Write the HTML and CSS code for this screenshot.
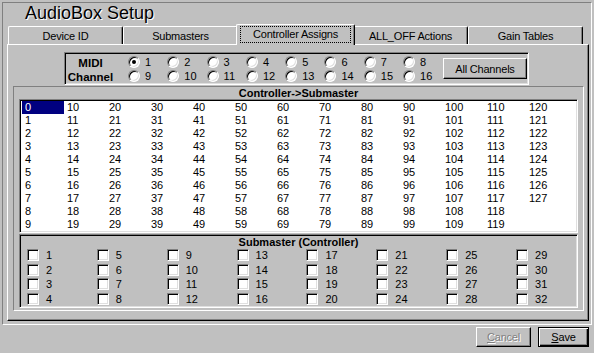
FILE: index.html
```html
<!DOCTYPE html>
<html>
<head>
<meta charset="utf-8">
<link rel="stylesheet" href="styles.css">
</head>
<body>
<div class="window">
  <div class="title">AudioBox Setup</div>
  <div class="tabs">
    <div class="tab">Device ID</div>
    <div class="tab">Submasters</div>
    <div class="tab sel"><div class="focus">Controller Assigns</div></div>
    <div class="tab">ALL_OFF Actions</div>
    <div class="tab">Gain Tables</div>
  </div>
  <div class="panel">
    <div class="midi">
      <div class="midilbl">MIDI<br>Channel</div>
      <div class="radios">
        <div class="r"><i class="radio on"></i><span>1</span></div>
        <div class="r"><i class="radio"></i><span>2</span></div>
        <div class="r"><i class="radio"></i><span>3</span></div>
        <div class="r"><i class="radio"></i><span>4</span></div>
        <div class="r"><i class="radio"></i><span>5</span></div>
        <div class="r"><i class="radio"></i><span>6</span></div>
        <div class="r"><i class="radio"></i><span>7</span></div>
        <div class="r"><i class="radio"></i><span>8</span></div>
        <div class="r"><i class="radio"></i><span>9</span></div>
        <div class="r"><i class="radio"></i><span>10</span></div>
        <div class="r"><i class="radio"></i><span>11</span></div>
        <div class="r"><i class="radio"></i><span>12</span></div>
        <div class="r"><i class="radio"></i><span>13</span></div>
        <div class="r"><i class="radio"></i><span>14</span></div>
        <div class="r"><i class="radio"></i><span>15</span></div>
        <div class="r"><i class="radio"></i><span>16</span></div>
      </div>
      <div class="btn allbtn">All Channels</div>
    </div>
    <div class="group">
      <div class="hdr hdr-top">Controller-&gt;Submaster</div>
      <div class="list">
        <div class="li selitem">0</div><div class="li">1</div><div class="li">2</div><div class="li">3</div><div class="li">4</div><div class="li">5</div><div class="li">6</div><div class="li">7</div><div class="li">8</div><div class="li">9</div>
        <div class="li">10</div><div class="li">11</div><div class="li">12</div><div class="li">13</div><div class="li">14</div><div class="li">15</div><div class="li">16</div><div class="li">17</div><div class="li">18</div><div class="li">19</div>
        <div class="li">20</div><div class="li">21</div><div class="li">22</div><div class="li">23</div><div class="li">24</div><div class="li">25</div><div class="li">26</div><div class="li">27</div><div class="li">28</div><div class="li">29</div>
        <div class="li">30</div><div class="li">31</div><div class="li">32</div><div class="li">33</div><div class="li">34</div><div class="li">35</div><div class="li">36</div><div class="li">37</div><div class="li">38</div><div class="li">39</div>
        <div class="li">40</div><div class="li">41</div><div class="li">42</div><div class="li">43</div><div class="li">44</div><div class="li">45</div><div class="li">46</div><div class="li">47</div><div class="li">48</div><div class="li">49</div>
        <div class="li">50</div><div class="li">51</div><div class="li">52</div><div class="li">53</div><div class="li">54</div><div class="li">55</div><div class="li">56</div><div class="li">57</div><div class="li">58</div><div class="li">59</div>
        <div class="li">60</div><div class="li">61</div><div class="li">62</div><div class="li">63</div><div class="li">64</div><div class="li">65</div><div class="li">66</div><div class="li">67</div><div class="li">68</div><div class="li">69</div>
        <div class="li">70</div><div class="li">71</div><div class="li">72</div><div class="li">73</div><div class="li">74</div><div class="li">75</div><div class="li">76</div><div class="li">77</div><div class="li">78</div><div class="li">79</div>
        <div class="li">80</div><div class="li">81</div><div class="li">82</div><div class="li">83</div><div class="li">84</div><div class="li">85</div><div class="li">86</div><div class="li">87</div><div class="li">88</div><div class="li">89</div>
        <div class="li">90</div><div class="li">91</div><div class="li">92</div><div class="li">93</div><div class="li">94</div><div class="li">95</div><div class="li">96</div><div class="li">97</div><div class="li">98</div><div class="li">99</div>
        <div class="li">100</div><div class="li">101</div><div class="li">102</div><div class="li">103</div><div class="li">104</div><div class="li">105</div><div class="li">106</div><div class="li">107</div><div class="li">108</div><div class="li">109</div>
        <div class="li">110</div><div class="li">111</div><div class="li">112</div><div class="li">113</div><div class="li">114</div><div class="li">115</div><div class="li">116</div><div class="li">117</div><div class="li">118</div><div class="li">119</div>
        <div class="li">120</div><div class="li">121</div><div class="li">122</div><div class="li">123</div><div class="li">124</div><div class="li">125</div><div class="li">126</div><div class="li">127</div>
      </div>
      <div class="sub">
        <div class="hdr hdr-sub">Submaster (Controller)</div>
        <div class="checks">
          <div class="c"><i class="cb"></i><span>1</span></div>
          <div class="c"><i class="cb"></i><span>2</span></div>
          <div class="c"><i class="cb"></i><span>3</span></div>
          <div class="c"><i class="cb"></i><span>4</span></div>
          <div class="c"><i class="cb"></i><span>5</span></div>
          <div class="c"><i class="cb"></i><span>6</span></div>
          <div class="c"><i class="cb"></i><span>7</span></div>
          <div class="c"><i class="cb"></i><span>8</span></div>
          <div class="c"><i class="cb"></i><span>9</span></div>
          <div class="c"><i class="cb"></i><span>10</span></div>
          <div class="c"><i class="cb"></i><span>11</span></div>
          <div class="c"><i class="cb"></i><span>12</span></div>
          <div class="c"><i class="cb"></i><span>13</span></div>
          <div class="c"><i class="cb"></i><span>14</span></div>
          <div class="c"><i class="cb"></i><span>15</span></div>
          <div class="c"><i class="cb"></i><span>16</span></div>
          <div class="c"><i class="cb"></i><span>17</span></div>
          <div class="c"><i class="cb"></i><span>18</span></div>
          <div class="c"><i class="cb"></i><span>19</span></div>
          <div class="c"><i class="cb"></i><span>20</span></div>
          <div class="c"><i class="cb"></i><span>21</span></div>
          <div class="c"><i class="cb"></i><span>22</span></div>
          <div class="c"><i class="cb"></i><span>23</span></div>
          <div class="c"><i class="cb"></i><span>24</span></div>
          <div class="c"><i class="cb"></i><span>25</span></div>
          <div class="c"><i class="cb"></i><span>26</span></div>
          <div class="c"><i class="cb"></i><span>27</span></div>
          <div class="c"><i class="cb"></i><span>28</span></div>
          <div class="c"><i class="cb"></i><span>29</span></div>
          <div class="c"><i class="cb"></i><span>30</span></div>
          <div class="c"><i class="cb"></i><span>31</span></div>
          <div class="c"><i class="cb"></i><span>32</span></div>
        </div>
      </div>
    </div>
  </div>
</div>
<div class="bar">
  <div class="btn cancel"><u>C</u>ancel</div>
  <div class="btn save"><u>S</u>ave</div>
</div>
</body>
</html>
```
FILE: styles.css
```css
* { box-sizing: border-box; }
html, body { margin: 0; padding: 0; }
body {
  width: 594px;
  height: 353px;
  overflow: hidden;
  background: #c0c0c0;
  font-family: "Liberation Sans", Arial, sans-serif;
  font-size: 11px;
  color: #000;
}
.window {
  margin: 2px 2px 0 2px;
  height: 323px;
  border: 1px solid;
  border-color: #808080 #fff #fff #808080;
}
.title {
  height: 21px;
  line-height: 21px;
  padding-left: 22px;
  font-size: 18px;
  color: #000;
  text-shadow: 1px 1px 0 #fff;
}
.tabs {
  display: flex;
  align-items: flex-end;
  height: 20px;
  margin-left: 5px;
}
.tab {
  width: 115px;
  height: 18px;
  flex: none;
  border-top: 1px solid #fff;
  border-left: 1px solid #fff;
  border-right: 1px solid #000;
  border-radius: 2px 2px 0 0;
  box-shadow: inset -1px 0 #808080;
  background: #c0c0c0;
  display: flex;
  align-items: center;
  justify-content: center;
  letter-spacing: -0.2px;
  padding-top: 1px;
}
.tab.sel {
  width: 119px;
  height: 21px;
  margin: 0 -2px -1px -2px;
  position: relative;
  z-index: 1;
  padding: 1px 3px 1px 3px;
  align-items: flex-start;
}
.focus {
  flex: 1;
  height: 17px;
  border: 1px dotted #000;
  display: flex;
  align-items: center;
  justify-content: center;
  padding-bottom: 2px;
}
.panel {
  margin-left: 4px;
  width: 582px;
  height: 277px;
  border: 1px solid;
  border-color: #fff #000 #000 #fff;
  box-shadow: inset -1px -1px #808080;
  padding-top: 7px;
}
.midi {
  margin-left: 56px;
  width: 465px;
  height: 33px;
  border: 1px solid;
  border-color: #808080 #fff #fff #808080;
  box-shadow: inset 1px 1px #000, inset -1px -1px #dfdfdf;
  display: flex;
  align-items: flex-start;
  padding: 2px 0 0 1px;
}
.midilbl {
  width: 49px;
  font-weight: bold;
  font-size: 11.5px;
  line-height: 14px;
  text-align: center;
  padding-top: 1px;
}
.radios {
  display: grid;
  grid-template-columns: repeat(8, 39.3px);
  grid-auto-rows: 14px;
  margin-left: 13px;
}
.r {
  display: flex;
  align-items: center;
  gap: 5px;
}
.radio {
  display: block;
  flex: none;
  width: 12px;
  height: 12px;
  border-radius: 50%;
  border: 1px solid;
  border-color: #808080 #fff #fff #808080;
  box-shadow: inset 1px 1px #000, inset -1px -1px #dfdfdf;
  background: #fff;
  position: relative;
}
.radio.on::after {
  content: "";
  position: absolute;
  left: 3px;
  top: 3px;
  width: 4px;
  height: 4px;
  border-radius: 50%;
  background: #000;
}
.btn {
  height: 20px;
  border: 1px solid;
  border-color: #fff #000 #000 #fff;
  box-shadow: inset -1px -1px #808080;
  background: #c0c0c0;
  display: flex;
  align-items: center;
  justify-content: center;
  letter-spacing: -0.2px;
}
.allbtn {
  margin: 3px 1px 0 auto;
  width: 84px;
  height: 21px;
}
.group {
  margin: 1px 0 0 5px;
  width: 571px;
  height: 225px;
  border: 1px solid;
  border-color: #808080 #fff #fff #808080;
}
.hdr {
  font-weight: bold;
  text-align: center;
}
.hdr-top {
  height: 12px;
  line-height: 12px;
}
.hdr-sub {
  height: 13px;
  line-height: 13px;
}
.list {
  margin: 0 5px;
  height: 134px;
  border: 1px solid;
  border-color: #808080 #fff #fff #808080;
  box-shadow: inset 1px 1px #000, inset -1px -1px #dfdfdf;
  background: #fff;
  padding: 1px 0 0 2px;
  display: grid;
  grid-auto-flow: column;
  grid-template-rows: repeat(10, 13px);
  grid-auto-columns: 42px;
}
.li {
  line-height: 13px;
  padding-left: 3px;
}
.li.selitem {
  background: #000080;
  color: #fff;
}
.sub {
  margin: 1px 5px 0 5px;
  height: 74px;
  border: 1px solid;
  border-color: #808080 #fff #fff #808080;
  box-shadow: inset 1px 1px #000, inset -1px -1px #dfdfdf;
  padding: 1px 1px 0 1px;
}
.checks {
  display: grid;
  grid-auto-flow: column;
  grid-template-rows: repeat(4, 12px);
  row-gap: 2.67px;
  grid-template-columns: repeat(7, 69.86px) 1fr;
  margin-left: 6px;
}
.c {
  display: flex;
  align-items: center;
  gap: 7px;
  line-height: 12px;
}
.cb {
  display: block;
  flex: none;
  width: 12px;
  height: 12px;
  border: 1px solid;
  border-color: #808080 #fff #fff #808080;
  box-shadow: inset 1px 1px #000, inset -1px -1px #dfdfdf;
  background: #fff;
}
.bar {
  display: flex;
  justify-content: flex-end;
  padding: 2px 5px 0 0;
}
.cancel {
  width: 55px;
  margin-right: 7px;
  color: #808080;
  text-shadow: 1px 1px 0 #fff;
}
.save {
  width: 51px;
  border: 1px solid #000;
  box-shadow: inset 1px 1px #fff, inset -1px -1px #000, inset -2px -2px #808080;
}
```
